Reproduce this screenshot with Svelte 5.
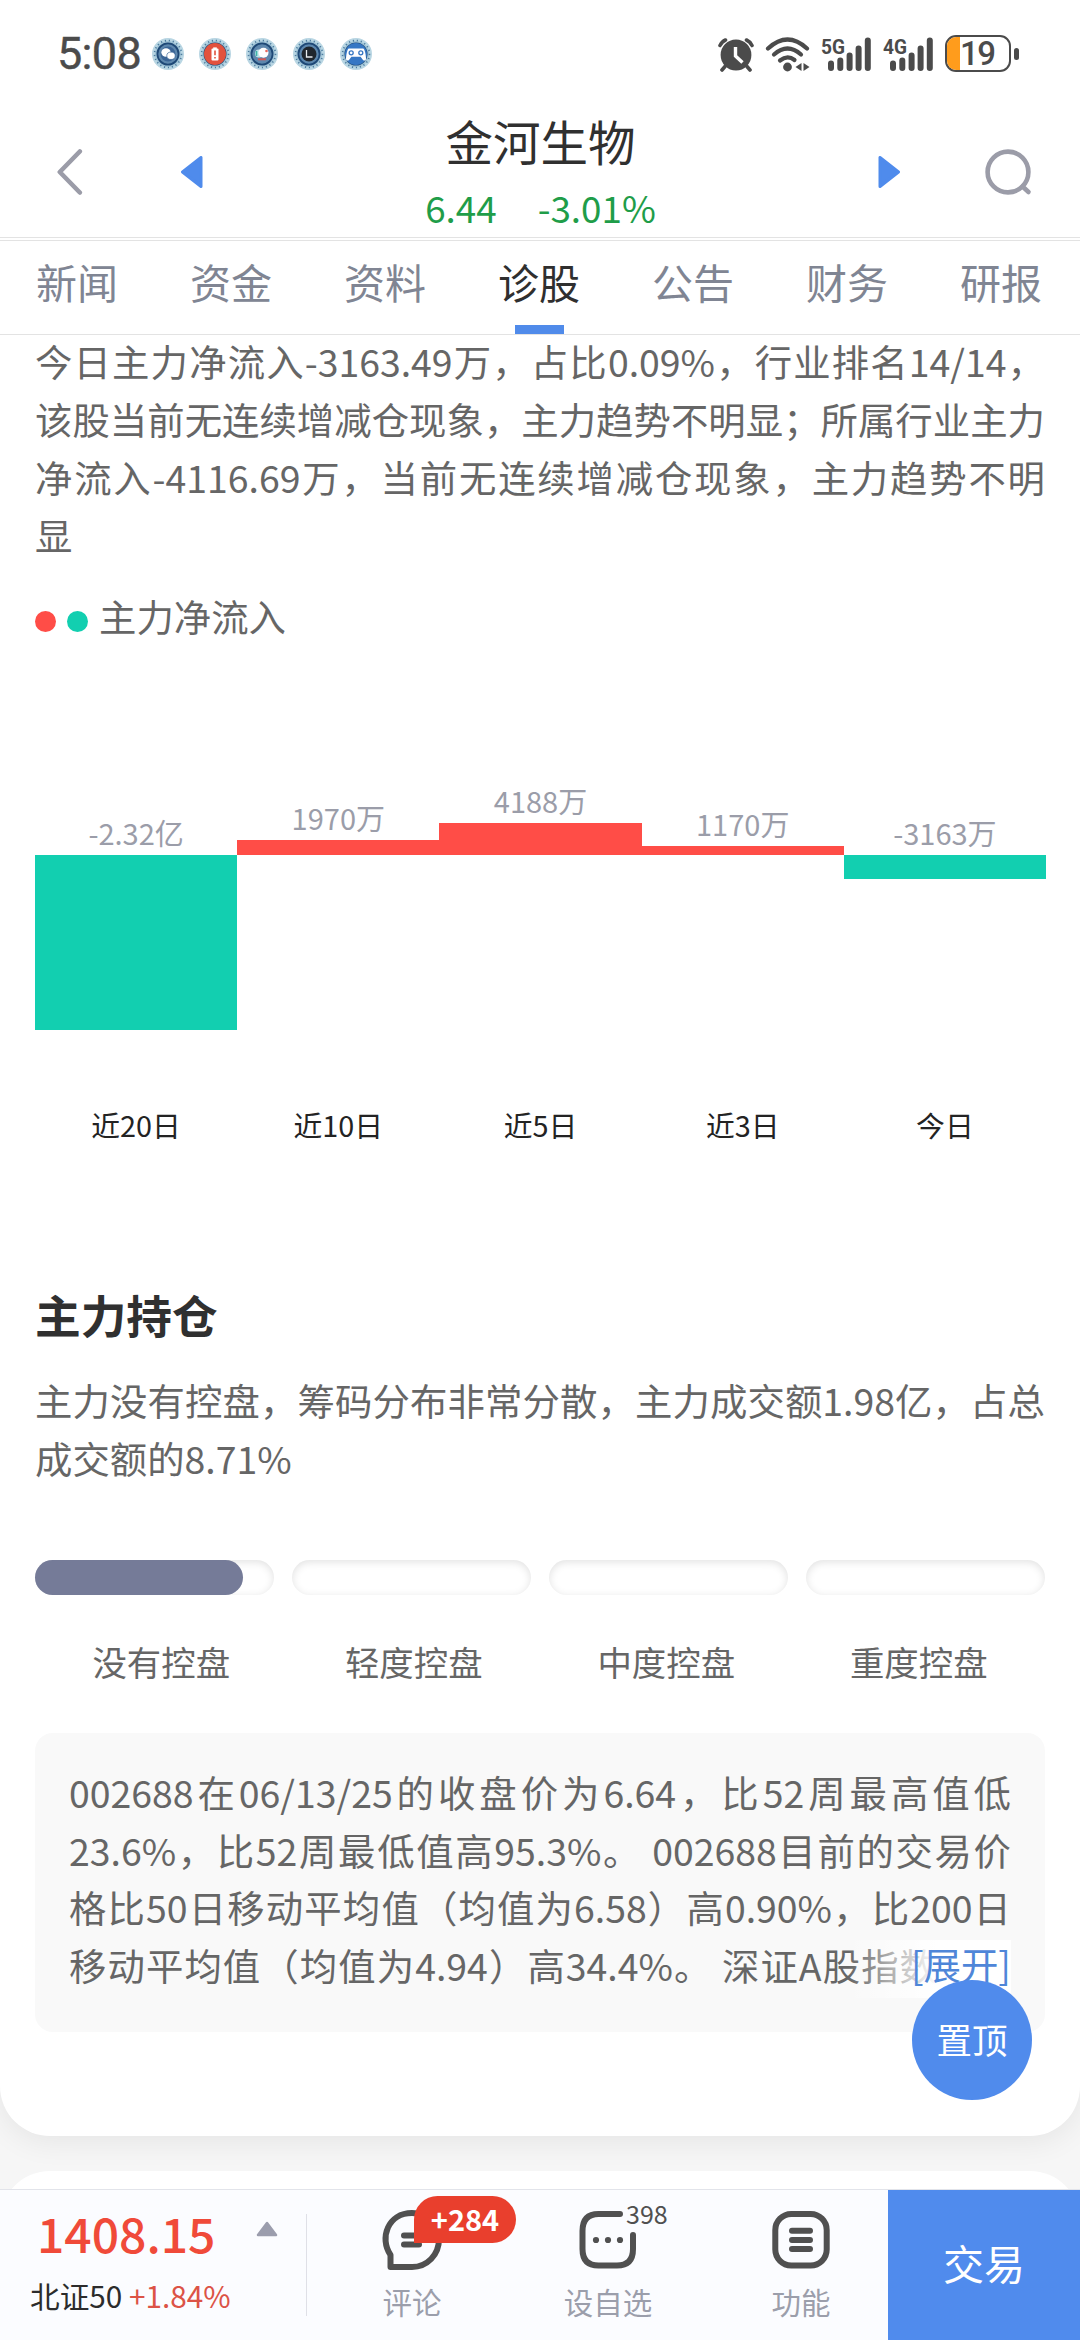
<script lang="ts">
  const tabs = ['新闻', '资金', '资料', '诊股', '公告', '财务', '研报'];
  let activeTab = $state('诊股');

  const summary = [
    '今日主力净流入-3163.49万，占比0.09%，行业排名14/14，',
    '该股当前无连续增减仓现象，主力趋势不明显；所属行业主力',
    '净流入-4116.69万，当前无连续增减仓现象，主力趋势不明',
    '显'
  ];

  // net inflow, unit: 万
  const flows = [
    { period: '近20日', value: -23200, label: '-2.32亿' },
    { period: '近10日', value: 1970, label: '1970万' },
    { period: '近5日', value: 4188, label: '4188万' },
    { period: '近3日', value: 1170, label: '1170万' },
    { period: '今日', value: -3163, label: '-3163万' }
  ];
  const maxFlow = Math.max(...flows.map((f) => Math.abs(f.value)));
  const barHeight = (value: number) => (Math.abs(value) / maxFlow) * 175;

  const holding = ['主力没有控盘，筹码分布非常分散，主力成交额1.98亿，占总', '成交额的8.71%'];

  const levels = [
    { name: '没有控盘', fill: 87.1 },
    { name: '轻度控盘', fill: 0 },
    { name: '中度控盘', fill: 0 },
    { name: '重度控盘', fill: 0 }
  ];

  const note = [
    '002688在06/13/25的收盘价为6.64，比52周最高值低',
    '23.6%，比52周最低值高95.3%。 002688目前的交易价',
    '格比50日移动平均值（均值为6.58）高0.90%，比200日',
    '移动平均值（均值为4.94）高34.4%。 深证A股指数'
  ];

  const apps = ['chat', 'battery', 'cloud', 'clock', 'game'];
</script>

{#snippet signal(net: string)}
  <svg class="signal" width="52" height="36" viewBox="0 0 52 36">
    <text x="0" y="17.5" textLength="24" lengthAdjust="spacingAndGlyphs">{net}</text>
    <path d="M10 27.5v4.5M19.3 24.5v7.5M28.6 19.5v12.5M37.6 12.5v19.5M46.8 4.5v27.5" />
  </svg>
{/snippet}

<div class="screen">
  <div class="status-bar">
    <span class="time">5:08</span>
    <div class="apps">
      {#each apps as app (app)}
        <svg width="34" height="34" viewBox="0 0 34 34">
          <circle cx="17" cy="17" r="14.5" fill="#9fc3d6" stroke="#b9d6e3" stroke-width="3" />
          <circle cx="17" cy="17" r="13.5" fill="none" stroke="#4d7c9f" stroke-width="1.6" stroke-dasharray="1.2 2.8" />
          <circle cx="17" cy="17" r="10.6" fill="#5d87ad" stroke="#1e4876" stroke-width="1.8" />
          {#if app === 'chat'}
            <circle cx="17" cy="17" r="7.5" fill="#3b6596" />
            <ellipse cx="15" cy="15.5" rx="4.7" ry="4.2" fill="#fff" />
            <ellipse cx="20" cy="18.8" rx="4.2" ry="3.7" fill="#fff" stroke="#3b6596" stroke-width=".7" />
          {:else if app === 'battery'}
            <circle cx="17" cy="17" r="11" fill="#e2513e" />
            <rect x="15.2" y="10.4" width="3.6" height="2" fill="#fff" />
            <rect x="13.5" y="11.6" width="7" height="11.8" rx="1" fill="#fff" />
            <path d="M17 13.5v4.8M17 20v1.6" stroke="#e2513e" stroke-width="1.6" />
          {:else if app === 'cloud'}
            <circle cx="17" cy="17" r="7.5" fill="#6288ae" />
            <circle cx="14" cy="16.6" r="4" fill="#bfe6ea" />
            <circle cx="18.5" cy="15.8" r="5" fill="#fff" />
            <circle cx="21.5" cy="14" r="1.3" fill="#e9655c" />
            <path d="M11.5 14v5" stroke="#3fb3a8" stroke-width="1.6" />
            <path d="M13 22.3h8" stroke="#cf5a57" stroke-width="2" />
          {:else if app === 'clock'}
            <circle cx="17" cy="17" r="7.5" fill="#20262d" />
            <path d="M14.5 13v7h6" fill="none" stroke="#e9edf0" stroke-width="1.3" />
          {:else}
            <circle cx="17" cy="17" r="11" fill="#3677c4" />
            <path d="M10 11.6h14c2 0 3 8 3 10.2c0 2.4-2.2 2.2-3.4.6l-2-2.6h-9.2l-2 2.6c-1.2 1.6-3.4 1.8-3.4-.6c0-2.2 1-10.2 3-10.2z" fill="#fff" />
            <circle cx="12.2" cy="15.8" r="2" fill="none" stroke="#3677c4" stroke-width="1.3" />
            <circle cx="21.8" cy="15.8" r="2" fill="none" stroke="#3677c4" stroke-width="1.3" />
          {/if}
        </svg>
      {/each}
    </div>
    <div class="system">
      <svg width="36" height="36" viewBox="0 0 36 36">
        <circle cx="18" cy="19" r="15.4" fill="#4b4b4b" />
        <path d="M2 9.5Q4 5.5 7.5 4M34 9.5Q32 5.5 28.5 4M7 30.5l-3 3.5M29 30.5l3 3.5" fill="none" stroke="#4b4b4b" stroke-width="3.6" stroke-linecap="round" />
        <path d="M17.5 11v9l7 6.5" fill="none" stroke="#fff" stroke-width="3.4" />
      </svg>
      <svg class="wifi" width="46" height="36" viewBox="0 0 46 36">
        <g fill="none" stroke="#4b4b4b" stroke-width="4.2" stroke-linecap="round">
          <path d="M3 12.5Q22.5-5.5 42 12.5" />
          <path d="M9 18.5Q22.5 6.5 36 18.5" />
          <path d="M15 24.5Q22.5 18.5 29.5 24" />
        </g>
        <circle cx="22.5" cy="31" r="4.4" fill="#4b4b4b" />
        <path d="M36.5 27v8l-6-4zM38.5 27v8l6-4z" fill="#4b4b4b" />
      </svg>
      {@render signal('5G')}
      {@render signal('4G')}
      <div class="battery">
        <div class="battery-body"><i></i><b>19</b></div>
        <span class="battery-tip"></span>
      </div>
    </div>
  </div>

  <header class="header">
    <svg width="26" height="48" viewBox="0 0 26 48">
      <path d="M22.8 3.5L2.8 24l20 20.5" fill="none" stroke="#9b9ca8" stroke-width="4.6" stroke-linecap="round" stroke-linejoin="round" />
    </svg>
    <svg class="prev" width="22" height="32" viewBox="0 0 22 32">
      <path d="M20 1.5V30.5L1.5 16z" fill="#4f8bec" stroke="#4f8bec" stroke-width="3" stroke-linejoin="round" />
    </svg>
    <div class="stock">
      <div class="stock-name">金河生物</div>
      <div class="stock-price"><span>6.44</span><span>-3.01%</span></div>
    </div>
    <svg class="next" width="22" height="32" viewBox="0 0 22 32">
      <path d="M2 1.5V30.5L20.5 16z" fill="#4f8bec" stroke="#4f8bec" stroke-width="3" stroke-linejoin="round" />
    </svg>
    <svg width="48" height="48" viewBox="0 0 48 48">
      <circle cx="24" cy="24" r="20.4" fill="none" stroke="#9b9ca8" stroke-width="4.6" />
      <path d="M38.5 38.5l6 5.5" stroke="#9b9ca8" stroke-width="4.6" stroke-linecap="round" />
    </svg>
  </header>

  <nav class="tabs">
    {#each tabs as tab (tab)}
      <button class="tab" class:active={tab === activeTab} onclick={() => (activeTab = tab)}>{tab}</button>
    {/each}
  </nav>

  <main class="content">
    <section class="card">
      <p class="text summary">
        {#each summary as line, i}
          <span class="line" class:last={i === summary.length - 1}>{line}</span>
        {/each}
      </p>

      <div class="legend">
        <i class="dot red"></i>
        <i class="dot green"></i>
        <span>主力净流入</span>
      </div>

      <div class="chart">
        {#each flows as flow (flow.period)}
          <div class="column">
            <div class="above">
              <span class="value">{flow.label}</span>
              {#if flow.value > 0}
                <div class="bar red" style="height: {barHeight(flow.value)}px"></div>
              {/if}
            </div>
            <div class="below">
              {#if flow.value < 0}
                <div class="bar green" style="height: {barHeight(flow.value)}px"></div>
              {/if}
            </div>
            <span class="period">{flow.period}</span>
          </div>
        {/each}
      </div>

      <h2>主力持仓</h2>
      <p class="text">
        {#each holding as line, i}
          <span class="line" class:last={i === holding.length - 1}>{line}</span>
        {/each}
      </p>

      <div class="levels">
        {#each levels as level (level.name)}
          <div class="level-track">
            {#if level.fill}
              <div class="level-fill" style="width: {level.fill}%"></div>
            {/if}
          </div>
        {/each}
      </div>
      <div class="level-names">
        {#each levels as level (level.name)}
          <span>{level.name}</span>
        {/each}
      </div>

      <div class="note">
        {#each note as line, i}
          <span class="line" class:clipped={i === note.length - 1}>{line}</span>
        {/each}
        <span class="expand">[展开]</span>
      </div>
    </section>
    <section class="card next-card"></section>
  </main>

  <button class="to-top">置顶</button>

  <footer class="bottom-bar">
    <div class="index">
      <div class="index-row">
        <span class="index-value">1408.15</span>
        <svg width="22" height="16" viewBox="0 0 22 16">
          <path d="M11 2L20 14H2z" fill="#9b9dad" stroke="#9b9dad" stroke-width="2.5" stroke-linejoin="round" />
        </svg>
      </div>
      <div class="index-name">北证50 <span>+1.84%</span></div>
    </div>
    <div class="action comment">
      <svg width="62" height="62" viewBox="0 0 62 62">
        <path d="M9.5 58V46C-2 29 7 4 31 4C46.5 4 58 16 58 30C58 46 46 58 31 58z" fill="none" stroke="#505050" stroke-width="6" stroke-linejoin="round" />
        <path d="M23 26.5h17M23 35.5h15" stroke="#505050" stroke-width="6" stroke-linecap="round" />
      </svg>
      <span>评论</span>
      <b class="badge">+284</b>
    </div>
    <div class="action watch">
      <svg width="62" height="62" viewBox="0 0 62 62">
        <path d="M43 5H21.5Q5.5 5 5.5 22V40Q5.5 56.5 21.5 56.5H40Q56 56.5 56 40V26" fill="none" stroke="#505050" stroke-width="6" stroke-linecap="round" />
        <circle cx="19" cy="31" r="3.1" fill="#505050" />
        <circle cx="31" cy="31" r="3.1" fill="#505050" />
        <circle cx="43" cy="31" r="3.1" fill="#505050" />
      </svg>
      <span>设自选</span>
      <small class="count">398</small>
    </div>
    <div class="action more">
      <svg width="62" height="62" viewBox="0 0 62 62">
        <rect x="5.3" y="5" width="51.4" height="51.5" rx="16" fill="none" stroke="#505050" stroke-width="6" />
        <path d="M22 21.8h18M22 31h18M22 40h18" stroke="#505050" stroke-width="6" stroke-linecap="round" />
      </svg>
      <span>功能</span>
    </div>
    <button class="trade">交易</button>
  </footer>
</div>

<style>
  :global(body) {
    margin: 0;
  }

  .screen {
    position: relative;
    display: flex;
    flex-direction: column;
    width: 1080px;
    height: 2340px;
    overflow: hidden;
    background: #fff;
    color: #666;
    font-family: 'Noto Sans CJK SC', sans-serif;
  }

  svg {
    display: block;
    flex: none;
  }

  button {
    padding: 0;
    border: none;
    background: none;
    font-family: inherit;
  }

  /* status bar */
  .status-bar {
    display: flex;
    align-items: center;
    height: 107px;
    padding: 0 61px 0 57px;
    color: #4b4b4b;
  }

  .time {
    width: 94px;
    font-family: Roboto, sans-serif;
    font-size: 45px;
    line-height: 52px;
    letter-spacing: -0.7px;
    -webkit-text-stroke: 0.4px #4b4b4b;
  }

  .apps {
    display: flex;
    gap: 13px;
  }

  .system {
    display: flex;
    align-items: center;
    margin-left: auto;
  }

  .wifi {
    margin: 0 10px 0 11px;
  }

  .signal {
    margin-right: 10px;
    overflow: visible;
  }

  .signal text {
    fill: #4b4b4b;
    font: 700 21px Roboto, sans-serif;
  }

  .signal path {
    fill: none;
    stroke: #4b4b4b;
    stroke-width: 6;
    stroke-linecap: round;
  }

  .battery {
    display: flex;
    align-items: center;
    gap: 3px;
  }

  .battery-body {
    display: flex;
    align-items: center;
    box-sizing: border-box;
    width: 66px;
    height: 37px;
    overflow: hidden;
    border: 2.5px solid #4b4b4b;
    border-radius: 11px;
  }

  .battery-body i {
    width: 13px;
    height: 100%;
    background: #ff9c1c;
  }

  .battery-body b {
    font-family: Roboto, sans-serif;
    font-size: 33px;
    font-weight: 500;
    line-height: 32px;
    letter-spacing: -1.5px;
  }

  .battery-tip {
    width: 5px;
    height: 12px;
    border-radius: 3px;
    background: #4b4b4b;
  }

  /* header */
  .header {
    display: flex;
    align-items: center;
    height: 130px;
    padding: 0 48px 0 57px;
    border-bottom: 1px solid #e3e3e3;
  }

  .prev {
    margin-left: 98px;
  }

  .next {
    margin-right: 84px;
  }

  .stock {
    flex: 1;
    text-align: center;
  }

  .stock-name {
    color: #303030;
    font-size: 47.5px;
    line-height: 65px;
  }

  .stock-price {
    display: flex;
    justify-content: center;
    gap: 41px;
    padding-top: 4px;
    color: #1f9d49;
    font-size: 36.8px;
    line-height: 60px;
  }

  /* tabs */
  .tabs {
    display: flex;
    height: 93px;
    margin-top: 2px;
    border-top: 1px solid #e3e3e3;
    border-bottom: 1px solid #e3e3e3;
  }

  .tab {
    position: relative;
    width: 154px;
    height: 93px;
    padding-bottom: 14px;
    color: #808593;
    font-size: 41px;
  }

  .tab.active {
    color: #2f2f2f;
  }

  .tab.active::after {
    content: '';
    position: absolute;
    bottom: 0;
    left: 53px;
    width: 49px;
    height: 9px;
    background: #508bea;
  }

  /* content */
  .content {
    flex: 1;
    min-height: 0;
    overflow: hidden;
    background: #f6f6f6;
  }

  .card {
    display: flow-root;
    padding: 0 35px 104px;
    border-radius: 0 0 50px 50px;
    background: #fff;
    box-shadow: 0 6px 30px rgba(0, 0, 0, 0.07);
  }

  .next-card {
    height: 200px;
    margin-top: 35px;
    padding: 0;
    border-radius: 50px 50px 0 0;
    box-shadow: none;
  }

  .text {
    margin: 0;
    font-size: 37.4px;
    line-height: 58px;
  }

  .line {
    display: block;
    white-space: nowrap;
    text-align: justify;
    text-align-last: justify;
  }

  .line.last {
    text-align-last: left;
  }

  .summary {
    margin-top: -3px;
  }

  .legend {
    display: flex;
    align-items: center;
    height: 50px;
    margin-top: 27px;
    font-size: 37.4px;
  }

  .dot {
    width: 21px;
    height: 21px;
    margin: 10px 11px 0 0;
    border-radius: 50%;
  }

  .red {
    background: #ff4d47;
  }

  .green {
    background: #12cfb0;
  }

  .chart {
    display: grid;
    grid-template-columns: repeat(5, 1fr);
    margin-right: -1px;
    text-align: center;
  }

  .column {
    display: flex;
    flex-direction: column;
  }

  .above {
    display: flex;
    flex-direction: column;
    justify-content: flex-end;
    height: 214px;
  }

  .below {
    height: 250px;
  }

  .value {
    margin-bottom: 2px;
    color: #9b9da9;
    font-size: 29px;
    line-height: 42px;
  }

  .period {
    color: #232323;
    font-size: 28.8px;
    line-height: 40px;
  }

  h2 {
    margin: 139px 0 27px;
    color: #303030;
    font-size: 45.7px;
    font-weight: 700;
    line-height: 60px;
  }

  .levels {
    display: flex;
    gap: 18px;
    margin-top: 73px;
  }

  .level-track {
    flex: 1;
    height: 35px;
    border-radius: 18px;
    background: #fff;
    box-shadow: inset 0 2px 9px rgba(0, 0, 0, 0.12);
  }

  .level-fill {
    height: 100%;
    border-radius: 18px;
    background: #757b98;
  }

  .level-names {
    display: grid;
    grid-template-columns: repeat(4, 1fr);
    margin-top: 41px;
    font-size: 34.4px;
    line-height: 50px;
    text-align: center;
  }

  .note {
    position: relative;
    box-sizing: border-box;
    height: 299px;
    margin-top: 47px;
    padding: 31px 34px;
    border-radius: 18px;
    background: #f9f9f9;
    font-size: 37.4px;
    line-height: 57.5px;
  }

  .clipped {
    margin-right: 74px;
  }

  /* fades out the end of the last visible line */
  .expand {
    position: absolute;
    top: 207px;
    right: 34px;
    width: 163px;
    height: 58px;
    background: linear-gradient(to right, rgba(255, 255, 255, 0), #fff 55%);
    color: #4f86d8;
    line-height: 48px;
    text-align: right;
  }

  .to-top {
    position: absolute;
    top: 1980px;
    right: 48px;
    width: 120px;
    height: 120px;
    padding-bottom: 3px;
    border-radius: 50%;
    background: #508bec;
    color: #fff;
    font-size: 35.5px;
  }

  /* bottom bar */
  .bottom-bar {
    display: flex;
    flex: none;
    height: 150px;
    border-top: 1px solid #e2e4ea;
    background: #fbfcff;
  }

  .index {
    position: relative;
    width: 307px;
  }

  .index::after {
    content: '';
    position: absolute;
    top: 24px;
    right: 0;
    width: 1px;
    height: 102px;
    background: #dfe0e7;
  }

  .index-row {
    display: flex;
    align-items: center;
    gap: 41px;
    padding: 9px 0 0 37px;
  }

  .index-value {
    color: #f04a39;
    font-size: 48px;
    font-weight: 500;
    line-height: 66px;
  }

  .index-row svg {
    margin-top: -7px;
  }

  .index-name {
    padding-left: 30px;
    color: #2c2c2c;
    font-size: 29.7px;
    line-height: 61px;
    white-space: nowrap;
  }

  .index-name span {
    color: #dc5346;
  }

  .action {
    position: relative;
    display: flex;
    flex-direction: column;
    align-items: center;
    padding-top: 19px;
    color: #9b9eab;
    font-size: 29.5px;
    line-height: 60px;
  }

  .comment {
    width: 210px;
  }

  .watch {
    width: 182px;
  }

  .more {
    width: 204px;
    margin-right: -15px;
  }

  .badge {
    position: absolute;
    top: 6px;
    left: 107px;
    width: 102px;
    height: 47px;
    border-radius: 24px 24px 24px 0;
    background: #e93f2d;
    color: #fff;
    font-size: 29px;
    line-height: 44px;
    text-align: center;
  }

  .count {
    position: absolute;
    top: 8px;
    left: 109px;
    color: #505050;
    font-size: 25px;
    line-height: 30px;
  }

  .trade {
    width: 192px;
    margin-left: auto;
    padding-bottom: 6px;
    background: #508bed;
    color: #fff;
    font-size: 41px;
  }
</style>
